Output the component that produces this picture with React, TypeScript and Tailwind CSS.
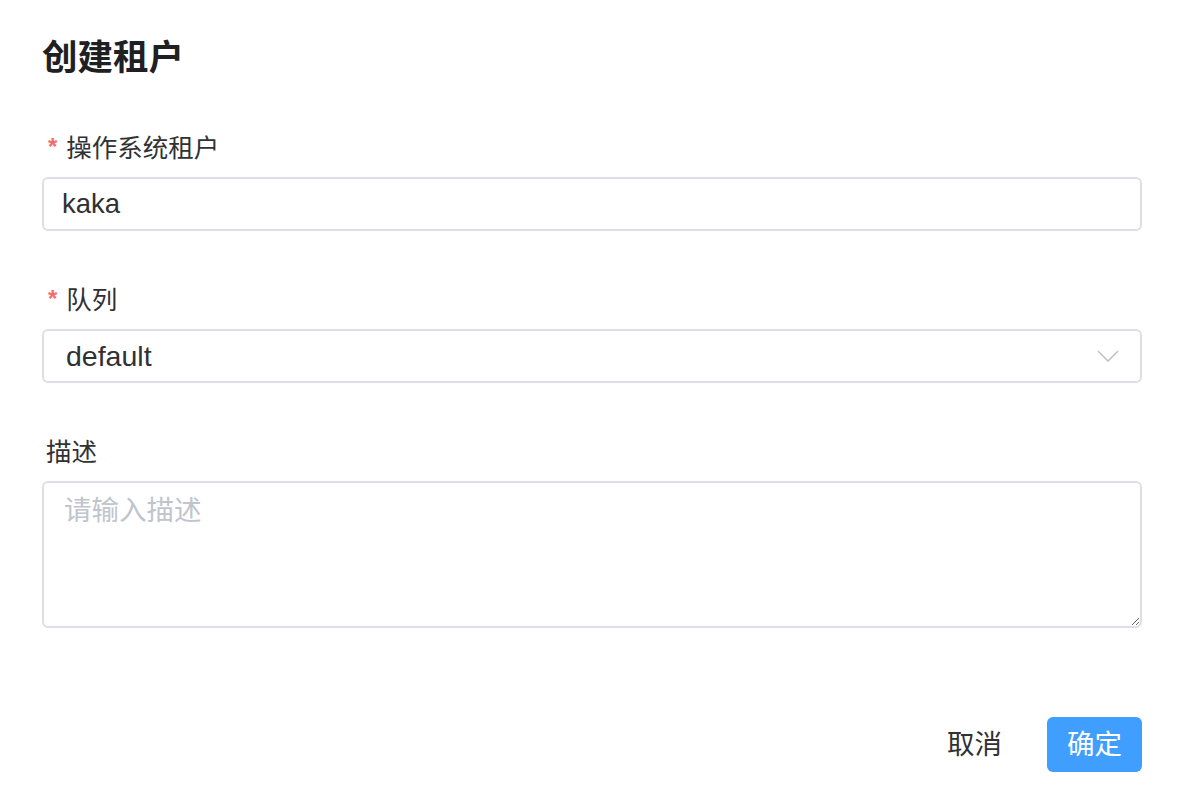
export default function App() {
  return (
    <div
      className="min-h-screen w-full bg-white pl-[42px] pr-[36px] pt-[38px] text-[#303133]"
      style={{ fontFamily: '"Liberation Sans", "Noto Sans CJK SC", sans-serif' }}
    >
      <h1 className="text-[35.5px] leading-[40px] font-semibold text-[#1f2023]">创建租户</h1>

      <div className="mt-[55px]">
        <label className="flex items-center h-[30px] text-[25.5px] mb-[14px] pl-[6px]">
          <span className="text-[#f56c6c] text-[24px] font-bold mr-[9px] -mt-[2px]">*</span>
          <span>操作系统租户</span>
        </label>
        <input
          defaultValue="kaka"
          className="w-full h-[54px] rounded-[6px] border-2 border-[#dcdfe6] px-[18px] text-[27.5px] text-[#303133] outline-none"
        />
      </div>

      <div className="mt-[54px]">
        <label className="flex items-center h-[30px] text-[25.5px] mb-[14px] pl-[6px]">
          <span className="text-[#f56c6c] text-[24px] font-bold mr-[9px] -mt-[2px]">*</span>
          <span>队列</span>
        </label>
        <div className="flex items-center justify-between w-full h-[54px] rounded-[6px] border-2 border-[#dcdfe6] pl-[22px] pr-[21px]">
          <span className="text-[28.5px]">default</span>
          <svg width="22" height="13" viewBox="0 0 22 13" fill="none">
            <path d="M1 1L11 11L21 1" stroke="#c0c4cc" strokeWidth="1.6" />
          </svg>
        </div>
      </div>

      <div className="mt-[54px]">
        <label className="flex items-center h-[30px] text-[25.5px] mb-[14px] pl-[4px]">描述</label>
        <textarea
          placeholder="请输入描述"
          className="block w-full h-[147px] rounded-[6px] border-2 border-[#dcdfe6] px-[20px] py-[10px] text-[27.5px] leading-[36px] outline-none placeholder:text-[#c0c4cc]"
        />
      </div>

      <div className="flex justify-end items-center mt-[89px]">
        <button className="h-[55px] px-[20px] text-[27.5px] text-[#303133] mr-[25px]">取消</button>
        <button className="h-[55px] w-[95px] rounded-[6px] bg-[#409eff] text-white text-[27.5px]">确定</button>
      </div>
    </div>
  );
}
